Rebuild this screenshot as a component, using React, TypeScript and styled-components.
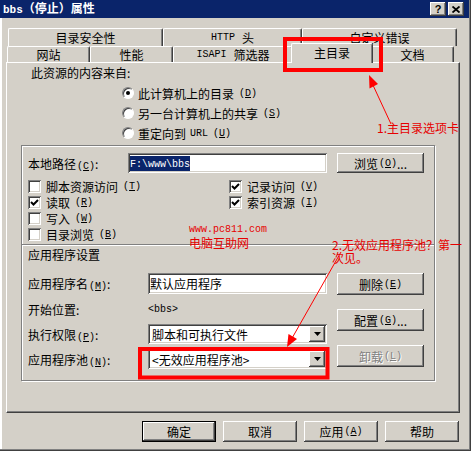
import React from 'react';
import styled, { createGlobalStyle, css } from 'styled-components';

const FACE = '#d4d0c8';
const SHADOW = '#808080';
const DARK = '#404040';
const NAVY = '#0a246a';
const RED = '#ff0000';

const GlobalStyle = createGlobalStyle`
  html, body {
    margin: 0;
    padding: 0;
    background: ${FACE};
  }
  body {
    font-family: "Noto Sans CJK SC", "Noto Sans", sans-serif;
    font-size: 12px;
    color: #000;
  }
  * {
    box-sizing: border-box;
  }
`;

const raised = css`
  box-shadow: inset -1px -1px 0 ${DARK}, inset 1px 1px 0 #fff, inset -2px -2px 0 ${SHADOW},
    inset 2px 2px 0 ${FACE};
`;

const sunken = css`
  box-shadow: inset 1px 1px 0 ${SHADOW}, inset -1px -1px 0 #fff, inset 2px 2px 0 ${DARK},
    inset -2px -2px 0 ${FACE};
`;

const Window = styled.div`
  position: relative;
  width: 471px;
  height: 451px;
  background: ${FACE};
  box-shadow: inset -1px -1px 0 ${DARK}, inset -2px -2px 0 ${SHADOW}, inset 2px 2px 0 #fff;
  overflow: hidden;
`;

const TitleBar = styled.div`
  height: 18px;
  margin-right: 2px;
  padding: 0 5px 0 3px;
  display: flex;
  align-items: center;
  background: ${NAVY};
  color: #fff;
  font-weight: bold;
  line-height: 14px;
`;

const TitleButtons = styled.div`
  margin-left: auto;
  display: flex;
  gap: 2px;
`;

const CapButton = styled.div`
  width: 16px;
  height: 14px;
  display: flex;
  align-items: center;
  justify-content: center;
  background: ${FACE};
  color: #000;
  font-family: "Liberation Sans", sans-serif;
  font-size: 11px;
  font-weight: bold;
  ${raised};
`;

const Body = styled.div`
  padding: 10px 0 0 6px;
`;

const TabRow = styled.div<{ $indent: number; $h: number }>`
  display: flex;
  margin-left: ${p => p.$indent}px;
  height: ${p => p.$h}px;
`;

const Tab = styled.div<{ $w: number; $active?: boolean }>`
  flex: none;
  width: ${p => p.$w}px;
  display: flex;
  align-items: center;
  justify-content: center;
  background: ${FACE};
  border-top: 1px solid #fff;
  border-left: 1px solid #fff;
  border-right: 1px solid ${DARK};
  border-radius: 2px 2px 0 0;
  box-shadow: inset -1px 0 0 ${SHADOW};
  line-height: 14px;
  white-space: nowrap;
  ${p =>
    p.$active &&
    css`
      position: relative;
      z-index: 2;
      margin: -3px -2px -1px;
      padding-bottom: 2px;
    `}
`;

const Panel = styled.div`
  width: 454px;
  height: 351px;
  padding-top: 3px;
  display: flex;
  flex-direction: column;
  background: ${FACE};
  border-top: 1px solid #fff;
  border-left: 1px solid #fff;
  border-right: 1px solid ${DARK};
  border-bottom: 1px solid ${DARK};
  box-shadow: inset -1px -1px 0 ${SHADOW};
`;

const SourceLabel = styled.div`
  margin-left: 24px;
  line-height: 14px;
`;

const RadioList = styled.div`
  margin: 3px 0 0 115px;
  display: flex;
  flex-direction: column;
`;

const OptionRow = styled.div<{ $h?: number }>`
  height: ${p => p.$h ?? 20}px;
  display: flex;
  align-items: center;
  gap: 4px;
  white-space: nowrap;
`;

const Radio = styled.span<{ $on?: boolean }>`
  flex: none;
  width: 12px;
  height: 12px;
  border-radius: 50%;
  background: #fff;
  border: 1px solid;
  border-color: ${SHADOW} #fff #fff ${SHADOW};
  box-shadow: inset 1px 1px 0 ${DARK};
  display: flex;
  align-items: center;
  justify-content: center;

  &::after {
    content: '';
    width: 4px;
    height: 4px;
    border-radius: 50%;
    background: ${p => (p.$on ? '#000' : 'transparent')};
  }
`;

const GroupBox = styled.div`
  width: 414px;
  margin: 2px 0 0 14px;
  padding: 7px 0 11px 6px;
  border: 1px solid ${SHADOW};
  box-shadow: inset 1px 1px 0 #fff, 1px 1px 0 #fff;
`;

const PathRow = styled.div`
  height: 20px;
  display: flex;
  align-items: center;
`;

const FieldLabel = styled.span<{ $w: number }>`
  flex: none;
  width: ${p => p.$w}px;
  white-space: nowrap;
`;

const TextBox = styled.div<{ $w: number; $h?: number }>`
  flex: none;
  width: ${p => p.$w}px;
  height: ${p => p.$h ?? 20}px;
  padding: 0 3px 0 2px;
  display: flex;
  align-items: center;
  background: #fff;
  white-space: nowrap;
  ${sunken};
`;

const Selection = styled.span`
  background: ${NAVY};
  color: #fff;
  line-height: 12px;
`;

const Mono = styled.span<{ $gap?: number }>`
  font-family: "Liberation Mono", monospace;
  font-size: 10px;
  margin-right: ${p => p.$gap ?? 0}px;
`;

const Mnemonic = styled.span`
  font-family: "Liberation Mono", monospace;
  font-size: 10px;
  margin-left: 1px;
`;

const PushButton = styled.div<{ $w: number; $h: number; $default?: boolean; $disabled?: boolean }>`
  flex: none;
  width: ${p => p.$w}px;
  height: ${p => p.$h}px;
  display: flex;
  align-items: center;
  justify-content: center;
  background: ${FACE};
  white-space: nowrap;
  ${raised};
  ${p =>
    p.$default &&
    css`
      border: 1px solid #000;
    `}
  ${p =>
    p.$disabled &&
    css`
      color: ${SHADOW};
      text-shadow: 1px 1px 0 #fff;
    `}
`;

const SideButton = styled(PushButton)`
  margin-left: 10px;
`;

const CheckGrid = styled.div`
  margin-top: 5px;
  display: grid;
  grid-template-columns: 201px 1fr;
  grid-auto-rows: 16px;
`;

const CheckBox = styled.span`
  flex: none;
  width: 13px;
  height: 13px;
  margin-right: 1px;
  display: flex;
  align-items: center;
  justify-content: center;
  background: #fff;
  ${sunken};
`;

const Separator = styled.div`
  width: 412px;
  height: 2px;
  margin: 2px 0 0 -6px;
  border-top: 1px solid ${SHADOW};
  border-bottom: 1px solid #fff;
`;

const SectionTitle = styled.div`
  margin-top: 2px;
  line-height: 14px;
`;

const AppSettings = styled.div`
  margin-top: 11px;
  display: flex;
  align-items: flex-start;
`;

const FormColumn = styled.div`
  display: flex;
  flex-direction: column;
  gap: 5px;
`;

const FormRow = styled.div<{ $h: number }>`
  height: ${p => p.$h}px;
  display: flex;
  align-items: center;
`;

const ButtonColumn = styled.div`
  display: flex;
  flex-direction: column;
  gap: 14px;
`;

const Select = styled.div`
  flex: none;
  width: 179px;
  height: 20px;
  padding: 2px;
  display: flex;
  align-items: center;
  background: #fff;
  ${sunken};
`;

const SelectText = styled.span`
  flex: 1;
  padding-left: 2px;
  white-space: nowrap;
  overflow: hidden;
`;

const DropButton = styled.span`
  flex: none;
  width: 16px;
  height: 16px;
  display: flex;
  align-items: center;
  justify-content: center;
  background: ${FACE};
  ${raised};
`;

const ButtonBar = styled.div`
  width: 454px;
  margin-top: 8px;
  padding-right: 1px;
  display: flex;
  justify-content: flex-end;
  gap: 7px;
`;

const Overlay = styled.svg`
  position: absolute;
  top: 0;
  left: 0;
  pointer-events: none;
`;

const Note = styled.span<{ $x: number; $y: number }>`
  position: absolute;
  left: ${p => p.$x}px;
  top: ${p => p.$y}px;
  color: #e60000;
  line-height: 12px;
  white-space: nowrap;
`;

const NoteMono = styled(Note)`
  font-family: "Liberation Mono", monospace;
  font-size: 10px;
  line-height: 10px;
`;

const NoteBlock = styled(Note)`
  display: flex;
  flex-direction: column;
  line-height: 13px;
`;

const Key = ({ k }: { k: string }) => (
  <Mnemonic>
    (<u>{k}</u>)
  </Mnemonic>
);

const Check = () => (
  <svg width="9" height="9" viewBox="0 0 9 9">
    <polyline points="1,4 3.5,6.5 8,2" fill="none" stroke="#000" strokeWidth="2" />
  </svg>
);

const Arrow = () => (
  <svg width="7" height="4" viewBox="0 0 7 4">
    <polygon points="0,0 7,0 3.5,4" fill="#000" />
  </svg>
);

const Option = ({ label, k, checked }: { label: string; k: string; checked?: boolean }) => (
  <OptionRow $h={16}>
    <CheckBox>{checked && <Check />}</CheckBox>
    {label}
    <Key k={k} />
  </OptionRow>
);

const backTabs = [
  { w: 155, label: <>目录安全性</> },
  { w: 139, label: <><Mono $gap={7}>HTTP</Mono>头</> },
  { w: 155, label: <>自定义错误</> },
];

const frontTabs = [
  { w: 83, label: <>网站</> },
  { w: 83, label: <>性能</> },
  { w: 120, label: <><Mono $gap={7}>ISAPI</Mono>筛选器</> },
  { w: 82, label: <>主目录</>, active: true },
  { w: 83, label: <>文档</> },
];

const App = () => {
  return (
    <>
      <GlobalStyle />
      <Window>
        <TitleBar>
          <span>
            <Mono style={{ fontSize: 11 }}>bbs</Mono>（停止）属性
          </span>
          <TitleButtons>
            <CapButton>?</CapButton>
            <CapButton>
              <svg width="8" height="7" viewBox="0 0 8 7">
                <path d="M0.5 0.5 L7.5 6.5 M7.5 0.5 L0.5 6.5" stroke="#000" strokeWidth="1.8" />
              </svg>
            </CapButton>
          </TitleButtons>
        </TitleBar>

        <Body>
          <TabRow $indent={2} $h={18}>
            {backTabs.map((t, i) => (
              <Tab key={i} $w={t.w}>
                {t.label}
              </Tab>
            ))}
          </TabRow>
          <TabRow $indent={1} $h={16}>
            {frontTabs.map((t, i) => (
              <Tab key={i} $w={t.w} $active={t.active}>
                {t.label}
              </Tab>
            ))}
          </TabRow>

          <Panel>
            <SourceLabel>此资源的内容来自:</SourceLabel>
            <RadioList>
              <OptionRow>
                <Radio $on />
                此计算机上的目录
                <Key k="D" />
              </OptionRow>
              <OptionRow>
                <Radio />
                另一台计算机上的共享
                <Key k="S" />
              </OptionRow>
              <OptionRow>
                <Radio />
                重定向到 <Mono>URL</Mono>
                <Key k="U" />
              </OptionRow>
            </RadioList>

            <GroupBox>
              <PathRow>
                <FieldLabel $w={100}>
                  本地路径
                  <Key k="C" />:
                </FieldLabel>
                <TextBox $w={199}>
                  <Selection>
                    <Mono>F:\www\bbs</Mono>
                  </Selection>
                </TextBox>
                <SideButton $w={87} $h={20}>
                  浏览<Key k="O" />...
                </SideButton>
              </PathRow>

              <CheckGrid>
                <Option label="脚本资源访问" k="T" />
                <Option label="记录访问" k="V" checked />
                <Option label="读取" k="R" checked />
                <Option label="索引资源" k="I" checked />
                <Option label="写入" k="W" />
                <span />
                <Option label="目录浏览" k="B" />
              </CheckGrid>

              <Separator />
              <SectionTitle>应用程序设置</SectionTitle>

              <AppSettings>
                <FormColumn>
                  <FormRow $h={21}>
                    <FieldLabel $w={120}>
                      应用程序名
                      <Key k="M" />:
                    </FieldLabel>
                    <TextBox $w={179} $h={21}>
                      默认应用程序
                    </TextBox>
                  </FormRow>
                  <FormRow $h={20}>
                    <FieldLabel $w={120}>开始位置:</FieldLabel>
                    <Mono>&lt;bbs&gt;</Mono>
                  </FormRow>
                  <FormRow $h={20}>
                    <FieldLabel $w={120}>
                      执行权限
                      <Key k="P" />:
                    </FieldLabel>
                    <Select>
                      <SelectText>脚本和可执行文件</SelectText>
                      <DropButton>
                        <Arrow />
                      </DropButton>
                    </Select>
                  </FormRow>
                  <FormRow $h={20}>
                    <FieldLabel $w={120}>
                      应用程序池
                      <Key k="N" />:
                    </FieldLabel>
                    <Select>
                      <SelectText>&lt;无效应用程序池&gt;</SelectText>
                      <DropButton>
                        <Arrow />
                      </DropButton>
                    </Select>
                  </FormRow>
                </FormColumn>
                <ButtonColumn>
                  <SideButton $w={87} $h={22}>
                    删除<Key k="E" />
                  </SideButton>
                  <SideButton $w={87} $h={22}>
                    配置<Key k="G" />...
                  </SideButton>
                  <SideButton $w={87} $h={22} $disabled>
                    卸载<Key k="L" />
                  </SideButton>
                </ButtonColumn>
              </AppSettings>
            </GroupBox>
          </Panel>

          <ButtonBar>
            <PushButton $w={74} $h={21} $default>
              确定
            </PushButton>
            <PushButton $w={74} $h={21}>
              取消
            </PushButton>
            <PushButton $w={74} $h={21}>
              应用<Key k="A" />
            </PushButton>
            <PushButton $w={74} $h={21}>
              帮助
            </PushButton>
          </ButtonBar>
        </Body>

        <Overlay width="471" height="451" viewBox="0 0 471 451">
          <rect x="285" y="39" width="96" height="31" fill="none" stroke={RED} strokeWidth="4" />
          <rect x="140" y="349" width="187.5" height="28.5" fill="none" stroke={RED} strokeWidth="4" />
          <line x1="391" y1="124" x2="372" y2="83" stroke={RED} strokeWidth="1" />
          <polygon points="369,75 378,84 369.5,88.5" fill={RED} />
          <line x1="341" y1="252" x2="291" y2="340" stroke={RED} strokeWidth="1" />
          <polygon points="287,347 297,339 288.5,334" fill={RED} />
        </Overlay>

        <Note $x={377} $y={122}>1.主目录选项卡</Note>
        <NoteMono $x={189} $y={225}>www.pc811.com</NoteMono>
        <Note $x={189} $y={237}>电脑互助网</Note>
        <NoteBlock $x={332} $y={238}>
          <span>2.无效应用程序池？第一</span>
          <span>次见。</span>
        </NoteBlock>
      </Window>
    </>
  );
};

export default App;
